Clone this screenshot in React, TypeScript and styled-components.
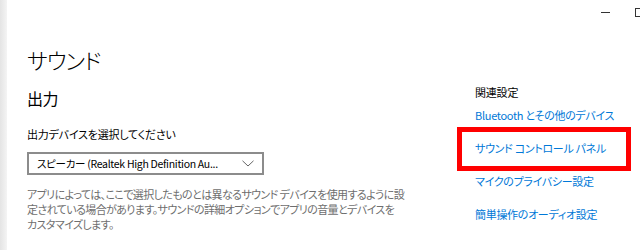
import React from "react";
import styled, { createGlobalStyle } from "styled-components";

const Global = createGlobalStyle`
  html, body { margin: 0; padding: 0; background: #fff; overflow: hidden; }
  body {
    font-family: "Noto Sans CJK JP", "Noto Sans", sans-serif;
    font-feature-settings: "palt" 1;
    -webkit-font-smoothing: antialiased;
  }
`;

const Window = styled.div`
  width: 640px;
  height: 250px;
  display: flex;
  overflow: hidden;
  background: #fff;
`;

const Strip = styled.div`
  width: 7px;
  flex: none;
  background: linear-gradient(to right, #e4e4e4, #f4f4f4);
`;

const Main = styled.div`
  flex: 1;
  display: flex;
  flex-direction: column;
  min-width: 0;
`;

const TitleBar = styled.div`
  height: 24px;
  display: flex;
  justify-content: flex-end;
  align-items: center;
  margin-right: -16px;
`;

const CtrlButton = styled.div`
  width: 34px;
  height: 24px;
  display: flex;
  align-items: center;
  justify-content: center;
`;

const MinGlyph = styled.div`
  width: 9px;
  height: 1px;
  background: #333;
`;

const MaxGlyph = styled.div`
  width: 9px;
  height: 9px;
  border: 1px solid #333;
  box-sizing: border-box;
`;

const Content = styled.div`
  display: flex;
  padding-left: 20px;
`;

const LeftCol = styled.div`
  width: 448px;
  flex: none;
  display: flex;
  flex-direction: column;
`;

const PageTitle = styled.h1`
  margin: 18px 0 0;
  font-size: 22px;
  line-height: 34px;
  font-weight: 300;
  letter-spacing: -1px;
  color: #000;
`;

const SectionTitle = styled.h2`
  margin: 10px 0 0;
  font-size: 16px;
  line-height: 24px;
  font-weight: 400;
  letter-spacing: -0.5px;
  color: #000;
`;

const Label = styled.div`
  margin-top: 15px;
  font-size: 11px;
  line-height: 18px;
  letter-spacing: -0.2px;
  color: #000;
`;

const Select = styled.div`
  margin-top: 9px;
  width: 237px;
  height: 23px;
  box-sizing: border-box;
  border: 2px solid #8c8c8c;
  display: flex;
  align-items: center;
  padding: 0 8px 0 8px;
  font-size: 10.5px;
  color: #000;
`;

const SelectText = styled.span`
  flex: 0 1 auto;
  white-space: nowrap;
  overflow: hidden;
  letter-spacing: -0.3px;
`;

const ChevronWrap = styled.span`
  margin-left: auto;
  display: flex;
  align-items: center;
`;

const Desc = styled.p`
  margin: 12px 0 0;
  font-size: 11px;
  line-height: 15px;
  letter-spacing: -0.6px;
  color: #6e6e6e;
  white-space: nowrap;
`;

const Link = styled.a<{ $highlight?: boolean }>`
  position: relative;
  display: inline-block;
  align-self: flex-start;
  font-size: 11px;
  line-height: 18px;
  letter-spacing: -0.3px;
  color: #0078d7;
  text-decoration: none;
  white-space: nowrap;
  ${(p) =>
    p.$highlight &&
    `
    &::after {
      content: "";
      position: absolute;
      top: -12px;
      bottom: -14px;
      left: -18px;
      right: -25px;
      border: 5px solid #f00;
    }
  `}
`;

const BottomLink = styled(Link)`
  margin-top: 15px;
`;

const RightCol = styled.div`
  display: flex;
  flex-direction: column;
  padding-top: 59px;
`;

const RelatedTitle = styled.div`
  font-size: 11px;
  line-height: 18px;
  letter-spacing: -0.2px;
  color: #000;
`;

const RelatedList = styled.div`
  margin-top: 5px;
  display: flex;
  flex-direction: column;
  gap: 15px;
`;

const Chevron = () => (
  <svg width="12" height="7" viewBox="0 0 12 7" fill="none">
    <path d="M0.5 0.8 L6 6 L11.5 0.8" stroke="#666" strokeWidth="1" />
  </svg>
);

export default function App() {
  return (
    <Window>
      <Global />
      <Strip />
      <Main>
        <TitleBar>
          <CtrlButton>
            <MinGlyph />
          </CtrlButton>
          <CtrlButton>
            <MaxGlyph />
          </CtrlButton>
        </TitleBar>
        <Content>
          <LeftCol>
            <PageTitle>サウンド</PageTitle>
            <SectionTitle>出力</SectionTitle>
            <Label>出力デバイスを選択してください</Label>
            <Select>
              <SelectText>スピーカー (Realtek High Definition Au...</SelectText>
              <ChevronWrap>
                <Chevron />
              </ChevronWrap>
            </Select>
            <Desc>
              アプリによっては、ここで選択したものとは異なるサウンド デバイスを使用するように設
              <br />
              定されている場合があります。サウンドの詳細オプションでアプリの音量とデバイスを
              <br />
              カスタマイズします。
            </Desc>
            <BottomLink>デバイスのプロパティ</BottomLink>
          </LeftCol>
          <RightCol>
            <RelatedTitle>関連設定</RelatedTitle>
            <RelatedList>
              <Link>Bluetooth とその他のデバイス</Link>
              <Link $highlight>サウンド コントロール パネル</Link>
              <Link>マイクのプライバシー設定</Link>
              <Link>簡単操作のオーディオ設定</Link>
            </RelatedList>
          </RightCol>
        </Content>
      </Main>
    </Window>
  );
}
